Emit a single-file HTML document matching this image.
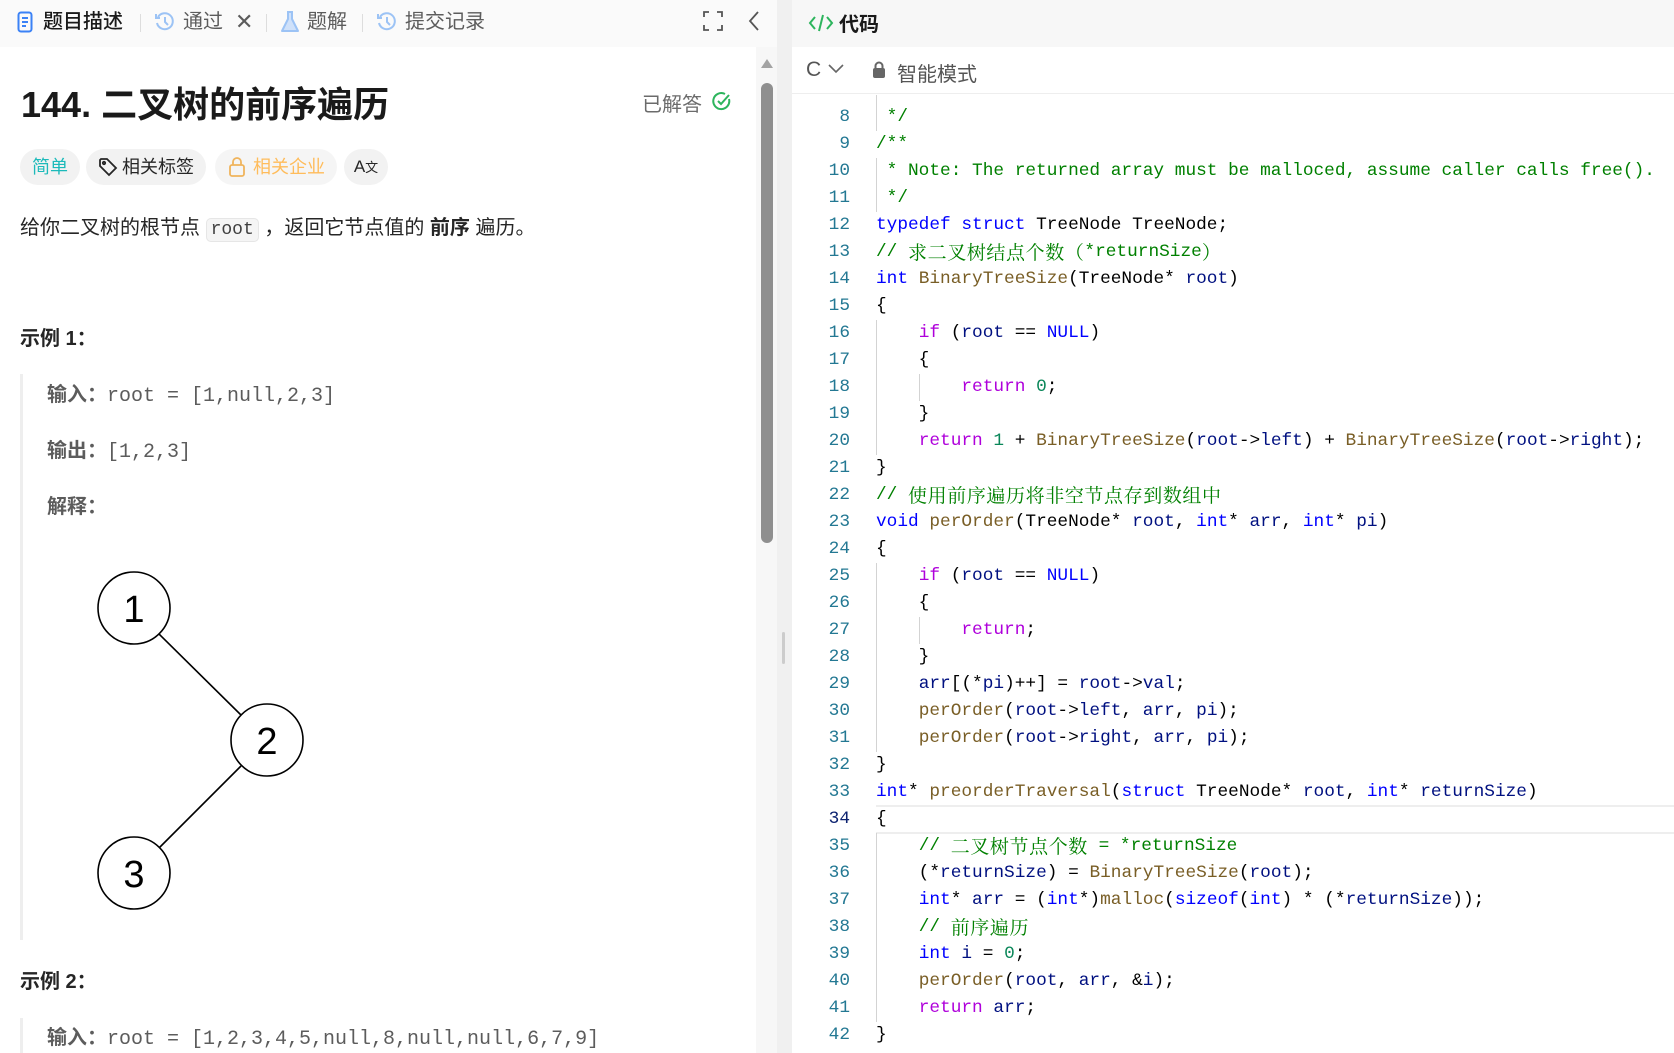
<!DOCTYPE html>
<html><head><meta charset="utf-8"><style>
*{margin:0;padding:0;box-sizing:border-box}
body{width:1674px;height:1053px;overflow:hidden;background:#f0f0f0;font-family:"Liberation Sans","Noto Sans CJK SC",sans-serif;position:relative}
.abs{position:absolute}
#left{left:0;top:0;width:777px;height:1053px;background:#fff;overflow:hidden}
#lhead{left:0;top:0;width:777px;height:47px;background:#fafafa}
.tab{top:8px;font-size:20px;color:#5c5c5c;line-height:28px;white-space:nowrap}
.sep{top:14px;width:1px;height:18px;background:#ddd}
#right{left:792px;top:0;width:882px;height:1053px;background:#fff;overflow:hidden}
#rhead{left:0;top:0;width:882px;height:47px;background:#f7f7f7}
.tag{top:149px;height:36px;border-radius:18px;background:#f2f2f2;font-size:18px;line-height:36px;padding:0 12px;white-space:nowrap}
.mono{font-family:"Liberation Mono","Noto Sans CJK SC",monospace}
.code{position:absolute;left:0;top:0;font-family:"Liberation Mono",monospace;font-size:17.8px;white-space:pre;color:#000}
.ln{position:absolute;left:0;width:58px;height:27px;line-height:27px;text-align:right;color:#237893;font-family:"Liberation Mono",monospace;font-size:17.8px}
.line{position:absolute;left:84px;height:27px;line-height:27px;overflow:visible}
.k{color:#0000ff}.c{color:#af00db}.f{color:#795e26}.v{color:#001080}.n{color:#098658}.m{color:#008000}
.cj{font-family:"Noto Serif CJK SC",serif;font-size:19px;letter-spacing:0.6px;line-height:1;display:inline-block;vertical-align:top;margin-top:3px}
.g{position:absolute;width:1px;background:#d3d3d3}
</style></head><body>
<div id="left" class="abs">
  <div id="lhead" class="abs">
    <svg class="abs" style="left:17px;top:11px" width="16" height="22" viewBox="0 0 16 22"><rect x="1.5" y="1.5" width="13" height="19" rx="2.5" fill="none" stroke="#3b82f6" stroke-width="2"/><path d="M5 7h6M5 11h6M5 15h4" stroke="#3b82f6" stroke-width="2"/></svg>
    <div class="tab abs" style="left:43px;color:#1a1a1a;font-weight:500">题目描述</div>
    <div class="sep abs" style="left:140px"></div>
    <svg class="abs" style="left:154px;top:11px" width="22" height="22" viewBox="0 0 22 22"><path d="M4 6A8 8 0 1 1 3 12" fill="none" stroke="#9cc3f5" stroke-width="2"/><path d="M2 3v4h4" fill="none" stroke="#9cc3f5" stroke-width="2"/><path d="M11 6v5l3 3" fill="none" stroke="#9cc3f5" stroke-width="2"/></svg>
    <div class="tab abs" style="left:183px">通过</div>
    <div class="tab abs" style="left:235px;font-size:22px">✕</div>
    <div class="sep abs" style="left:266px"></div>
    <svg class="abs" style="left:280px;top:10px" width="20" height="24" viewBox="0 0 20 24"><path d="M7 2h6M8 2v7L2 21h16L12 9V2" fill="#cfe1fa" stroke="#9cc3f5" stroke-width="2" stroke-linejoin="round"/></svg>
    <div class="tab abs" style="left:307px">题解</div>
    <div class="sep abs" style="left:362px"></div>
    <svg class="abs" style="left:376px;top:11px" width="22" height="22" viewBox="0 0 22 22"><path d="M4 6A8 8 0 1 1 3 12" fill="none" stroke="#9cc3f5" stroke-width="2"/><path d="M2 3v4h4" fill="none" stroke="#9cc3f5" stroke-width="2"/><path d="M11 6v5l3 3" fill="none" stroke="#9cc3f5" stroke-width="2"/></svg>
    <div class="tab abs" style="left:405px">提交记录</div>
    <svg class="abs" style="left:703px;top:11px" width="20" height="20" viewBox="0 0 20 20" fill="none" stroke="#555" stroke-width="1.8"><path d="M1 6V1h5M14 1h5v5M19 14v5h-5M6 19H1v-5"/></svg>
    <svg class="abs" style="left:748px;top:10px" width="12" height="22" viewBox="0 0 12 22" fill="none" stroke="#555" stroke-width="1.8"><path d="M10 2L2 11l8 9"/></svg>
  </div>
  <div class="abs" style="left:21px;top:76px;font-size:36px;font-weight:bold;color:#1a1a1a;white-space:nowrap">144. 二叉树的前序遍历</div>
  <div class="abs" style="left:642px;top:88px;font-size:20px;color:#6b6b6b;white-space:nowrap">已解答</div>
  <svg class="abs" style="left:712px;top:91px" width="20" height="20" viewBox="0 0 20 20" fill="none" stroke="#2db55d" stroke-width="2"><path d="M17 8A8 8 0 1 1 13 3"/><path d="M6 10l3 3 8-9"/></svg>
  <div class="tag abs" style="left:20px;color:#1cbaba">简单</div>
  <div class="tag abs" style="left:86px;color:#262626;padding-left:36px">相关标签</div>
  <svg class="abs" style="left:98px;top:157px" width="20" height="20" viewBox="0 0 20 20" fill="none" stroke="#262626" stroke-width="1.8"><path d="M2 3v6l9 9 7-7-9-9H3z"/><circle cx="6" cy="6" r="1.2"/></svg>
  <div class="tag abs" style="left:215px;color:#ffa116;opacity:.7;padding-left:38px">相关企业</div>
  <svg class="abs" style="left:228px;top:156px" width="18" height="22" viewBox="0 0 18 22" fill="none" stroke="#f0b45c" stroke-width="1.8"><rect x="2" y="9" width="14" height="11" rx="2"/><path d="M5 9V6a4 4 0 0 1 8 0v3"/></svg>
  <div class="tag abs" style="left:344px;width:44px;padding:0;text-align:center;color:#262626;font-size:17px">A<span style="font-size:13px">文</span></div>
  <div class="abs" style="left:20px;top:211px;font-size:20px;color:#262626;white-space:nowrap">给你二叉树的根节点 <span class="mono" style="background:#f5f5f5;border:1px solid #e6e6e6;border-radius:5px;padding:1px 4px;font-size:18px;color:#404040">root</span> ，返回它节点值的 <b>前序</b> 遍历。</div>
  <div class="abs" style="left:20px;top:322px;font-size:20px;font-weight:bold;color:#262626">示例 1：</div>
  <div class="abs" style="left:20px;top:374px;width:3px;height:566px;background:#eee"></div>
  <div class="abs" style="left:47px;top:378px;font-size:20px;color:#5c5c5c;white-space:nowrap"><b>输入：</b><span class="mono">root = [1,null,2,3]</span></div>
  <div class="abs" style="left:47px;top:434px;font-size:20px;color:#5c5c5c;white-space:nowrap"><b>输出：</b><span class="mono">[1,2,3]</span></div>
  <div class="abs" style="left:47px;top:490px;font-size:20px;color:#5c5c5c"><b>解释：</b></div>
  <svg class="abs" style="left:0;top:540px" width="340" height="380" viewBox="0 540 340 380">
    <g stroke="#000" stroke-width="1.6" fill="#fff">
      <line x1="159" y1="634" x2="241" y2="715"/><line x1="241" y1="766" x2="159" y2="848"/>
      <circle cx="134" cy="608" r="36"/><circle cx="267" cy="740" r="36"/><circle cx="134" cy="873" r="36"/>
    </g>
    <g font-family="Liberation Sans" font-size="38" text-anchor="middle" fill="#000">
      <text x="134" y="622">1</text><text x="267" y="754">2</text><text x="134" y="887">3</text>
    </g>
  </svg>
  <div class="abs" style="left:20px;top:965px;font-size:20px;font-weight:bold;color:#262626">示例 2：</div>
  <div class="abs" style="left:20px;top:1018px;width:3px;height:40px;background:#eee"></div>
  <div class="abs" style="left:47px;top:1021px;font-size:20px;color:#5c5c5c;white-space:nowrap"><b>输入：</b><span class="mono">root = [1,2,3,4,5,null,8,null,null,6,7,9]</span></div>
  <div class="abs" style="left:756px;top:47px;width:21px;height:1006px;background:#f7f7f7"></div>
  <div class="abs" style="left:761px;top:59px;width:0;height:0;border-left:6px solid transparent;border-right:6px solid transparent;border-bottom:9px solid #a3a3a3"></div>
  <div class="abs" style="left:761px;top:83px;width:12px;height:460px;border-radius:6px;background:#8f8f8f"></div>
</div>
<div class="abs" style="left:782px;top:632px;width:3px;height:32px;background:#ccc;border-radius:2px"></div>
<div id="right" class="abs">
  <div id="rhead" class="abs">
    <svg class="abs" style="left:16px;top:13px" width="26" height="20" viewBox="0 0 26 20" fill="none" stroke="#2db55d" stroke-width="2"><path d="M7 4L2 10l5 6M19 4l5 6-5 6M15 2l-4 16"/></svg>
    <div class="abs" style="left:47px;top:8px;font-size:20px;color:#1a1a1a;font-weight:bold">代码</div>
  </div>
  <div class="abs" style="left:0;top:47px;width:882px;height:47px;background:#fff;border-bottom:1px solid #eee"></div>
  <div class="abs" style="left:14px;top:58px;font-size:21px;color:#555">C</div>
  <svg class="abs" style="left:36px;top:64px" width="16" height="10" viewBox="0 0 16 10" fill="none" stroke="#666" stroke-width="1.6"><path d="M1 1l7 7 7-7"/></svg>
  <svg class="abs" style="left:80px;top:61px" width="14" height="17" viewBox="0 0 14 17"><rect x="1" y="7" width="12" height="10" rx="2" fill="#666"/><path d="M3.5 7V5a3.5 3.5 0 0 1 7 0v2" fill="none" stroke="#666" stroke-width="2"/></svg>
  <div class="abs" style="left:105px;top:58px;font-size:20px;color:#555">智能模式</div>
  <div class="abs" style="left:0;top:95px;width:882px;height:958px;overflow:hidden">
   <div class="abs" style="left:0;top:5px;width:882px;height:958px">
    <div class="abs" style="left:84px;top:705px;width:798px;height:29px;border-top:2px solid #eee;border-bottom:2px solid #eee"></div>
    <div class="g" style="left:84px;top:-9px;height:40px"></div>
    <div class="g" style="left:84px;top:58px;height:54px"></div>
    <div class="g" style="left:84px;top:220px;height:135px"></div>
    <div class="g" style="left:127px;top:274px;height:27px"></div>
    <div class="g" style="left:84px;top:463px;height:189px"></div>
    <div class="g" style="left:127px;top:517px;height:27px"></div>
    <div class="g" style="left:84px;top:733px;height:189px"></div>
   </div>
  </div>
  <div class="abs" style="left:0;top:95px;width:882px;height:958px;overflow:hidden">
  <div class="code" style="top:5px">
<div class="ln" style="top:4px">8</div><div class="line" style="top:4px"><span class="m"> */</span></div>
<div class="ln" style="top:31px">9</div><div class="line" style="top:31px"><span class="m">/**</span></div>
<div class="ln" style="top:58px">10</div><div class="line" style="top:58px"><span class="m"> * Note: The returned array must be malloced, assume caller calls free().</span></div>
<div class="ln" style="top:85px">11</div><div class="line" style="top:85px"><span class="m"> */</span></div>
<div class="ln" style="top:112px">12</div><div class="line" style="top:112px"><span class="k">typedef</span> <span class="k">struct</span> TreeNode TreeNode;</div>
<div class="ln" style="top:139px">13</div><div class="line" style="top:139px"><span class="m">// <span class="cj">求二叉树结点个数（</span>*returnSize<span class="cj">）</span></span></div>
<div class="ln" style="top:166px">14</div><div class="line" style="top:166px"><span class="k">int</span> <span class="f">BinaryTreeSize</span>(TreeNode* <span class="v">root</span>)</div>
<div class="ln" style="top:193px">15</div><div class="line" style="top:193px">{</div>
<div class="ln" style="top:220px">16</div><div class="line" style="top:220px">    <span class="c">if</span> (<span class="v">root</span> == <span class="k">NULL</span>)</div>
<div class="ln" style="top:247px">17</div><div class="line" style="top:247px">    {</div>
<div class="ln" style="top:274px">18</div><div class="line" style="top:274px">        <span class="c">return</span> <span class="n">0</span>;</div>
<div class="ln" style="top:301px">19</div><div class="line" style="top:301px">    }</div>
<div class="ln" style="top:328px">20</div><div class="line" style="top:328px">    <span class="c">return</span> <span class="n">1</span> + <span class="f">BinaryTreeSize</span>(<span class="v">root</span>-&gt;<span class="v">left</span>) + <span class="f">BinaryTreeSize</span>(<span class="v">root</span>-&gt;<span class="v">right</span>);</div>
<div class="ln" style="top:355px">21</div><div class="line" style="top:355px">}</div>
<div class="ln" style="top:382px">22</div><div class="line" style="top:382px"><span class="m">// <span class="cj">使用前序遍历将非空节点存到数组中</span></span></div>
<div class="ln" style="top:409px">23</div><div class="line" style="top:409px"><span class="k">void</span> <span class="f">perOrder</span>(TreeNode* <span class="v">root</span>, <span class="k">int</span>* <span class="v">arr</span>, <span class="k">int</span>* <span class="v">pi</span>)</div>
<div class="ln" style="top:436px">24</div><div class="line" style="top:436px">{</div>
<div class="ln" style="top:463px">25</div><div class="line" style="top:463px">    <span class="c">if</span> (<span class="v">root</span> == <span class="k">NULL</span>)</div>
<div class="ln" style="top:490px">26</div><div class="line" style="top:490px">    {</div>
<div class="ln" style="top:517px">27</div><div class="line" style="top:517px">        <span class="c">return</span>;</div>
<div class="ln" style="top:544px">28</div><div class="line" style="top:544px">    }</div>
<div class="ln" style="top:571px">29</div><div class="line" style="top:571px">    <span class="v">arr</span>[(*<span class="v">pi</span>)++] = <span class="v">root</span>-&gt;<span class="v">val</span>;</div>
<div class="ln" style="top:598px">30</div><div class="line" style="top:598px">    <span class="f">perOrder</span>(<span class="v">root</span>-&gt;<span class="v">left</span>, <span class="v">arr</span>, <span class="v">pi</span>);</div>
<div class="ln" style="top:625px">31</div><div class="line" style="top:625px">    <span class="f">perOrder</span>(<span class="v">root</span>-&gt;<span class="v">right</span>, <span class="v">arr</span>, <span class="v">pi</span>);</div>
<div class="ln" style="top:652px">32</div><div class="line" style="top:652px">}</div>
<div class="ln" style="top:679px">33</div><div class="line" style="top:679px"><span class="k">int</span>* <span class="f">preorderTraversal</span>(<span class="k">struct</span> TreeNode* <span class="v">root</span>, <span class="k">int</span>* <span class="v">returnSize</span>)</div>
<div class="ln" style="top:706px;color:#0b216f">34</div><div class="line" style="top:706px">{</div>
<div class="ln" style="top:733px">35</div><div class="line" style="top:733px">    <span class="m">// <span class="cj">二叉树节点个数</span> = *returnSize</span></div>
<div class="ln" style="top:760px">36</div><div class="line" style="top:760px">    (*<span class="v">returnSize</span>) = <span class="f">BinaryTreeSize</span>(<span class="v">root</span>);</div>
<div class="ln" style="top:787px">37</div><div class="line" style="top:787px">    <span class="k">int</span>* <span class="v">arr</span> = (<span class="k">int</span>*)<span class="f">malloc</span>(<span class="k">sizeof</span>(<span class="k">int</span>) * (*<span class="v">returnSize</span>));</div>
<div class="ln" style="top:814px">38</div><div class="line" style="top:814px">    <span class="m">// <span class="cj">前序遍历</span></span></div>
<div class="ln" style="top:841px">39</div><div class="line" style="top:841px">    <span class="k">int</span> <span class="v">i</span> = <span class="n">0</span>;</div>
<div class="ln" style="top:868px">40</div><div class="line" style="top:868px">    <span class="f">perOrder</span>(<span class="v">root</span>, <span class="v">arr</span>, &amp;<span class="v">i</span>);</div>
<div class="ln" style="top:895px">41</div><div class="line" style="top:895px">    <span class="c">return</span> <span class="v">arr</span>;</div>
<div class="ln" style="top:922px">42</div><div class="line" style="top:922px">}</div>
  </div>
  </div>
</div>
</body></html>
